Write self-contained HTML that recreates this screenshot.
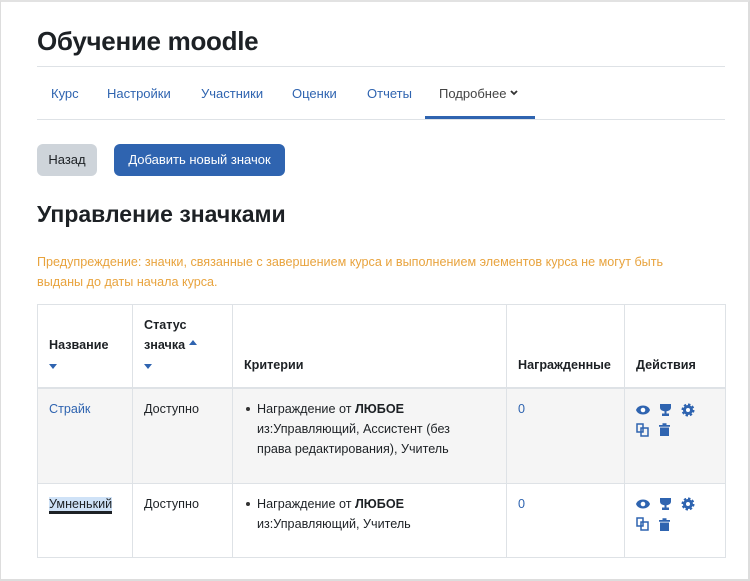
<!DOCTYPE html>
<html><head><meta charset="utf-8"><style>
*{box-sizing:border-box;margin:0;padding:0}
body{width:750px;height:581px;background:#fff;font-family:"Liberation Sans",sans-serif;color:#1d2125;position:relative;overflow:hidden}
.frame{position:absolute;left:0;top:0;width:750px;height:581px;border:1px solid #ddd;border-top:2px solid #e2e2e2;border-right:2px solid #ddd;border-bottom:2px solid #ddd}
h1{position:absolute;left:37px;top:26px;font-size:26px;font-weight:bold;letter-spacing:-0.3px}
.hr{position:absolute;left:37px;width:688px;height:1px;background:#dee2e6}
.nav a{position:absolute;top:86px;font-size:13px;color:#2f64b0}
.nav .act{color:#444}
.ul{position:absolute;left:425px;top:116px;width:110px;height:3px;background:#2f64b0}
.btn{position:absolute;top:144px;height:32px;border-radius:6px;font-size:13px;line-height:32px;text-align:center}
h2{position:absolute;left:37px;top:201px;font-size:23px;font-weight:bold}
.warn{position:absolute;left:37px;top:252px;width:668px;font-size:12.6px;line-height:20px;color:#e8a33d}
table{position:absolute;left:37px;top:304px;border-collapse:collapse;font-size:12.6px;width:689px}
td,th{border:1px solid #dee2e6;vertical-align:top;padding:10px 11px;text-align:left}
th{vertical-align:bottom;font-weight:bold;height:80px;padding-bottom:12px;line-height:20px;border-bottom:2px solid #dee2e6}
td{line-height:20px}
tr.g td{background:#f5f5f5}
a{text-decoration:none;color:#2f64b0}
.car{display:inline-block;width:0;height:0;border-left:4px solid transparent;border-right:4px solid transparent;border-top:5px solid #2f64b0}
.caru{display:inline-block;width:0;height:0;border-left:4px solid transparent;border-right:4px solid transparent;border-bottom:5px solid #2f64b0;vertical-align:4px}
ul{list-style:none}
li{position:relative;padding-left:13px;padding-right:20px}
li:before{content:"";position:absolute;left:2px;top:8px;width:4px;height:4px;border-radius:50%;background:#333}
.ic svg{display:inline-block;vertical-align:middle;margin-right:9px}
</style></head><body>
<div class="frame"></div>
<h1>Обучение moodle</h1>
<div class="hr" style="top:66px"></div>
<div class="nav">
<a style="left:51px">Курс</a><a style="left:107px">Настройки</a><a style="left:201px">Участники</a><a style="left:292px">Оценки</a><a style="left:367px">Отчеты</a><a class="act" style="left:439px">Подробнее <svg width="8" height="6" viewBox="0 0 8 6" style="vertical-align:2px"><path d="M1 1L4 4L7 1" fill="none" stroke="#333" stroke-width="1.8"/></svg></a>
</div>
<div class="ul"></div>
<div class="hr" style="top:119px"></div>
<div class="btn" style="left:37px;width:60px;background:#ced4da;color:#1d2125">Назад</div>
<div class="btn" style="left:114px;width:171px;background:#2f64b0;color:#fff">Добавить новый значок</div>
<h2>Управление значками</h2>
<div class="warn">Предупреждение: значки, связанные с завершением курса и выполнением элементов курса не могут быть выданы до даты начала курса.</div>
<table>
<tr><th style="width:95px">Название<br><span class="car"></span></th><th style="width:100px">Статус<br>значка <span class="caru"></span><br><span class="car"></span></th><th style="width:274px">Критерии</th><th style="width:118px">Награжденные</th><th>Действия</th></tr>
<tr class="g" style="height:95px"><td><a>Страйк</a></td><td>Доступно</td><td><ul><li>Награждение от <b>ЛЮБОЕ</b> из:Управляющий, Ассистент (без права редактирования), Учитель</li></ul></td><td><a>0</a></td><td class="ic">
<svg width="14" height="10" viewBox="0 0 14 10"><path d="M0 5C2-1 12-1 14 5C12 11 2 11 0 5Z" fill="#2f64b0"/><circle cx="7" cy="5" r="2.3" fill="#fff"/></svg><svg width="13" height="14" viewBox="0 0 13 14"><path d="M1 1H12V4.5C12 7 9.5 8 7.5 8.3V10.5H10V13H3V10.5H5.5V8.3C3.5 8 1 7 1 4.5Z" fill="#2f64b0"/></svg><svg width="14" height="14" viewBox="0 0 14 14"><circle cx="7" cy="7" r="5" fill="#2f64b0" stroke="#2f64b0" stroke-width="3" stroke-dasharray="2.2 1.7"/><circle cx="7" cy="7" r="2" fill="#fff"/></svg><br>
<svg width="14" height="14" viewBox="0 0 14 14"><path d="M1 1H7V9H1Z M5 5H12V13H5Z" fill="none" stroke="#2f64b0" stroke-width="1.5"/></svg><svg width="11" height="13" viewBox="0 0 11 13"><path d="M0 2H11V3.7H0Z M3.5 0.3H7.5V2H3.5Z M1 4.5H10V13H1Z" fill="#2f64b0"/></svg></td></tr>
<tr style="height:74px"><td><a style="background:#cfe2f7;color:#1d2125;border-bottom:3px solid #1d2125">Умненький</a></td><td>Доступно</td><td><ul><li>Награждение от <b>ЛЮБОЕ</b> из:Управляющий, Учитель</li></ul></td><td><a>0</a></td><td class="ic">
<svg width="14" height="10" viewBox="0 0 14 10"><path d="M0 5C2-1 12-1 14 5C12 11 2 11 0 5Z" fill="#2f64b0"/><circle cx="7" cy="5" r="2.3" fill="#fff"/></svg><svg width="13" height="14" viewBox="0 0 13 14"><path d="M1 1H12V4.5C12 7 9.5 8 7.5 8.3V10.5H10V13H3V10.5H5.5V8.3C3.5 8 1 7 1 4.5Z" fill="#2f64b0"/></svg><svg width="14" height="14" viewBox="0 0 14 14"><circle cx="7" cy="7" r="5" fill="#2f64b0" stroke="#2f64b0" stroke-width="3" stroke-dasharray="2.2 1.7"/><circle cx="7" cy="7" r="2" fill="#fff"/></svg><br>
<svg width="14" height="14" viewBox="0 0 14 14"><path d="M1 1H7V9H1Z M5 5H12V13H5Z" fill="none" stroke="#2f64b0" stroke-width="1.5"/></svg><svg width="11" height="13" viewBox="0 0 11 13"><path d="M0 2H11V3.7H0Z M3.5 0.3H7.5V2H3.5Z M1 4.5H10V13H1Z" fill="#2f64b0"/></svg></td></tr>
</table>
</body></html>
